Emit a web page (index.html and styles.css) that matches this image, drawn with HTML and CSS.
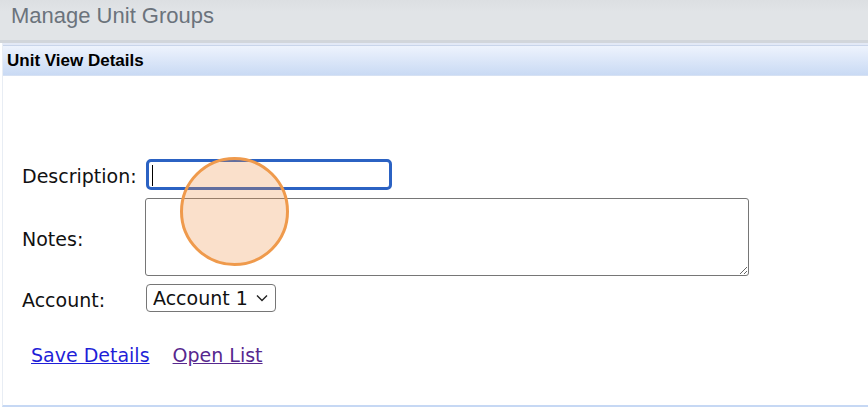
FILE: index.html
```html
<!DOCTYPE html>
<html lang="en">
<head>
<meta charset="utf-8">
<title>Manage Unit Groups</title>
<link rel="stylesheet" href="styles.css">
</head>
<body>
<div class="page-header">
  <h1 class="page-title">Manage Unit Groups</h1>
</div>
<div class="panel">
  <div class="panel-title">Unit View Details</div>
  <form class="details-form">
    <div class="form-grid">
      <label class="field-label" for="desc">Description:</label>
      <input class="text-input" id="desc" type="text">
      <label class="field-label" for="notes">Notes:</label>
      <textarea class="notes-input" id="notes"></textarea>
      <label class="field-label" for="account">Account:</label>
      <span class="select-wrap">
        <select class="account-select" id="account">
          <option>Account 1</option>
        </select>
        <svg class="select-arrow" width="12" height="8" viewBox="0 0 12 8"><path d="M1 1.5 L6 6.5 L11 1.5" fill="none" stroke="#222" stroke-width="1.4"/></svg>
      </span>
    </div>
    <div class="form-actions">
      <a class="action-link" href="#save">Save Details</a>
      <a class="action-link visited" href="#list">Open List</a>
    </div>
  </form>
</div>
<div class="click-indicator"></div>
</body>
</html>
```

FILE: styles.css
```css
html, body {
  margin: 0;
  padding: 0;
  background: #ffffff;
}

body {
  font-family: "DejaVu Sans", Verdana, sans-serif;
  color: #111;
  position: relative;
  height: 416px;
  overflow: hidden;
}

.page-header {
  height: 40px;
  background: linear-gradient(#dcdfe2, #e1e4e7 30%, #e1e4e7);
  border-bottom: 3px solid #d2d6db;
}

.page-title {
  margin: 0;
  padding: 3px 0 0 11px;
  font-family: "Liberation Sans", Arial, sans-serif;
  font-weight: normal;
  font-size: 22px;
  line-height: 25px;
  color: #6b737c;
}

.panel {
  margin-left: 2px;
  border-left: 1px solid #e8edf4;
  border-bottom: 2px solid #c6d8f4;
}

.panel-title {
  height: 20px;
  padding: 6px 0 4px 4px;
  border-top: 2px solid #e3e9f6;
  border-bottom: 1px solid #d6e1f3;
  box-shadow: inset 0 1px 0 #c9d5ea;
  background: linear-gradient(#eff4fd, #c9daf4);
  font-family: "Liberation Sans", Arial, sans-serif;
  font-weight: bold;
  font-size: 17px;
  line-height: 20px;
  color: #000;
}

.details-form {
  padding: 83px 0 39px 19px;
}

.form-grid {
  display: grid;
  grid-template-columns: 123px auto;
  row-gap: 8px;
  align-items: center;
  justify-items: start;
}

.field-label {
  font-size: 19px;
  padding-top: 3px;
}

.text-input {
  box-sizing: border-box;
  width: 246px;
  height: 31px;
  margin: 0 0 0 1px;
  border: 3px solid #2b62c3;
  border-radius: 5px;
  outline: none;
  background: #fff linear-gradient(#000, #000) no-repeat 3px 3px / 1px 21px;
  font-size: 19px;
}

.notes-input {
  box-sizing: border-box;
  width: 604px;
  height: 78px;
  margin: 0;
  border: 1px solid #767676;
  border-radius: 3px;
  font-size: 19px;
  font-family: "DejaVu Sans", sans-serif;
}

.select-wrap {
  position: relative;
  display: inline-flex;
  margin-left: 1px;
}

.account-select {
  appearance: none;
  -webkit-appearance: none;
  box-sizing: border-box;
  width: 130px;
  height: 28px;
  margin: 0;
  padding: 0 0 0 6px;
  border: 1px solid #767676;
  border-radius: 4px;
  background: #fff;
  font-family: "DejaVu Sans", sans-serif;
  font-size: 19px;
  color: #111;
}

.select-arrow {
  position: absolute;
  right: 8px;
  top: 10px;
  pointer-events: none;
}

.form-actions {
  display: flex;
  gap: 23px;
  margin-top: 32px;
  padding-left: 9px;
  font-size: 19px;
  line-height: 22px;
}

.action-link {
  color: #1f1fd8;
  text-decoration: underline;
}

.action-link.visited {
  color: #57288e;
}

.click-indicator {
  position: absolute;
  left: 180px;
  top: 157px;
  width: 103px;
  height: 103px;
  border: 3px solid #ef9a4c;
  border-radius: 50%;
  background: rgba(236, 145, 70, 0.28);
  pointer-events: none;
}
```
